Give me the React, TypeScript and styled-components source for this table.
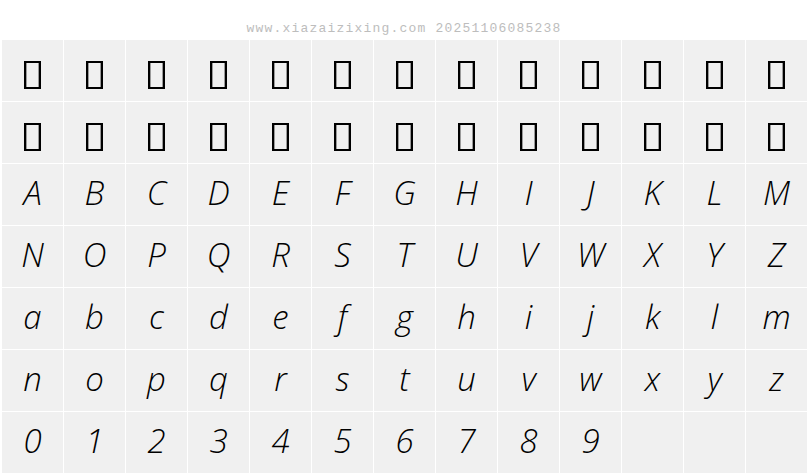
import React from "react";
import styled, { createGlobalStyle } from "styled-components";

const Global = createGlobalStyle`
  html, body { margin: 0; padding: 0; background: #ffffff; }
  body { width: 808px; height: 476px; overflow: hidden; }
`;

const Page = styled.div`
  display: flex;
  flex-direction: column;
  width: 808px;
`;

const Watermark = styled.div`
  height: 40px;
  display: flex;
  align-items: center;
  justify-content: center;
  padding-top: 16px;
  box-sizing: border-box;
  font-family: "Liberation Mono", "DejaVu Sans Mono", monospace;
  font-size: 13px;
  letter-spacing: 1.2px;
  color: #bdbdbd;
  line-height: 1;
`;

const Grid = styled.div`
  display: grid;
  grid-template-columns: repeat(13, 61px);
  grid-auto-rows: 61px;
  gap: 1px;
  padding-left: 2px;
`;

const Cell = styled.div`
  background: #f0f0f0;
  display: flex;
  align-items: center;
  justify-content: center;
  font-family: "Open Sans", "Lato", sans-serif;
  font-style: italic;
  font-weight: 350;
  font-size: 33px;
  color: #000000;
  line-height: 1;
  padding-bottom: 4px;
  box-sizing: border-box;
`;

const Tofu = styled.span`
  display: block;
  width: 17px;
  height: 28px;
  box-sizing: border-box;
  border: 2px solid #000000;
  box-shadow: inset 1px 0 0 #9a9a9a, inset -1px 0 0 #9a9a9a;
  margin-top: 12px;
`;

const upper = "ABCDEFGHIJKLMNOPQRSTUVWXYZ".split("");
const lower = "abcdefghijklmnopqrstuvwxyz".split("");
const digits = "0123456789".split("");

export default function App() {
  const cells: React.ReactNode[] = [];
  for (let i = 0; i < 26; i++) {
    cells.push(
      <Cell key={"t" + i}>
        <Tofu />
      </Cell>
    );
  }
  [...upper, ...lower, ...digits].forEach((ch, i) => {
    cells.push(<Cell key={"c" + i}>{ch}</Cell>);
  });
  for (let i = 0; i < 3; i++) cells.push(<Cell key={"e" + i} />);
  return (
    <Page>
      <Global />
      <Watermark>www.xiazaizixing.com 20251106085238</Watermark>
      <Grid>{cells}</Grid>
    </Page>
  );
}
